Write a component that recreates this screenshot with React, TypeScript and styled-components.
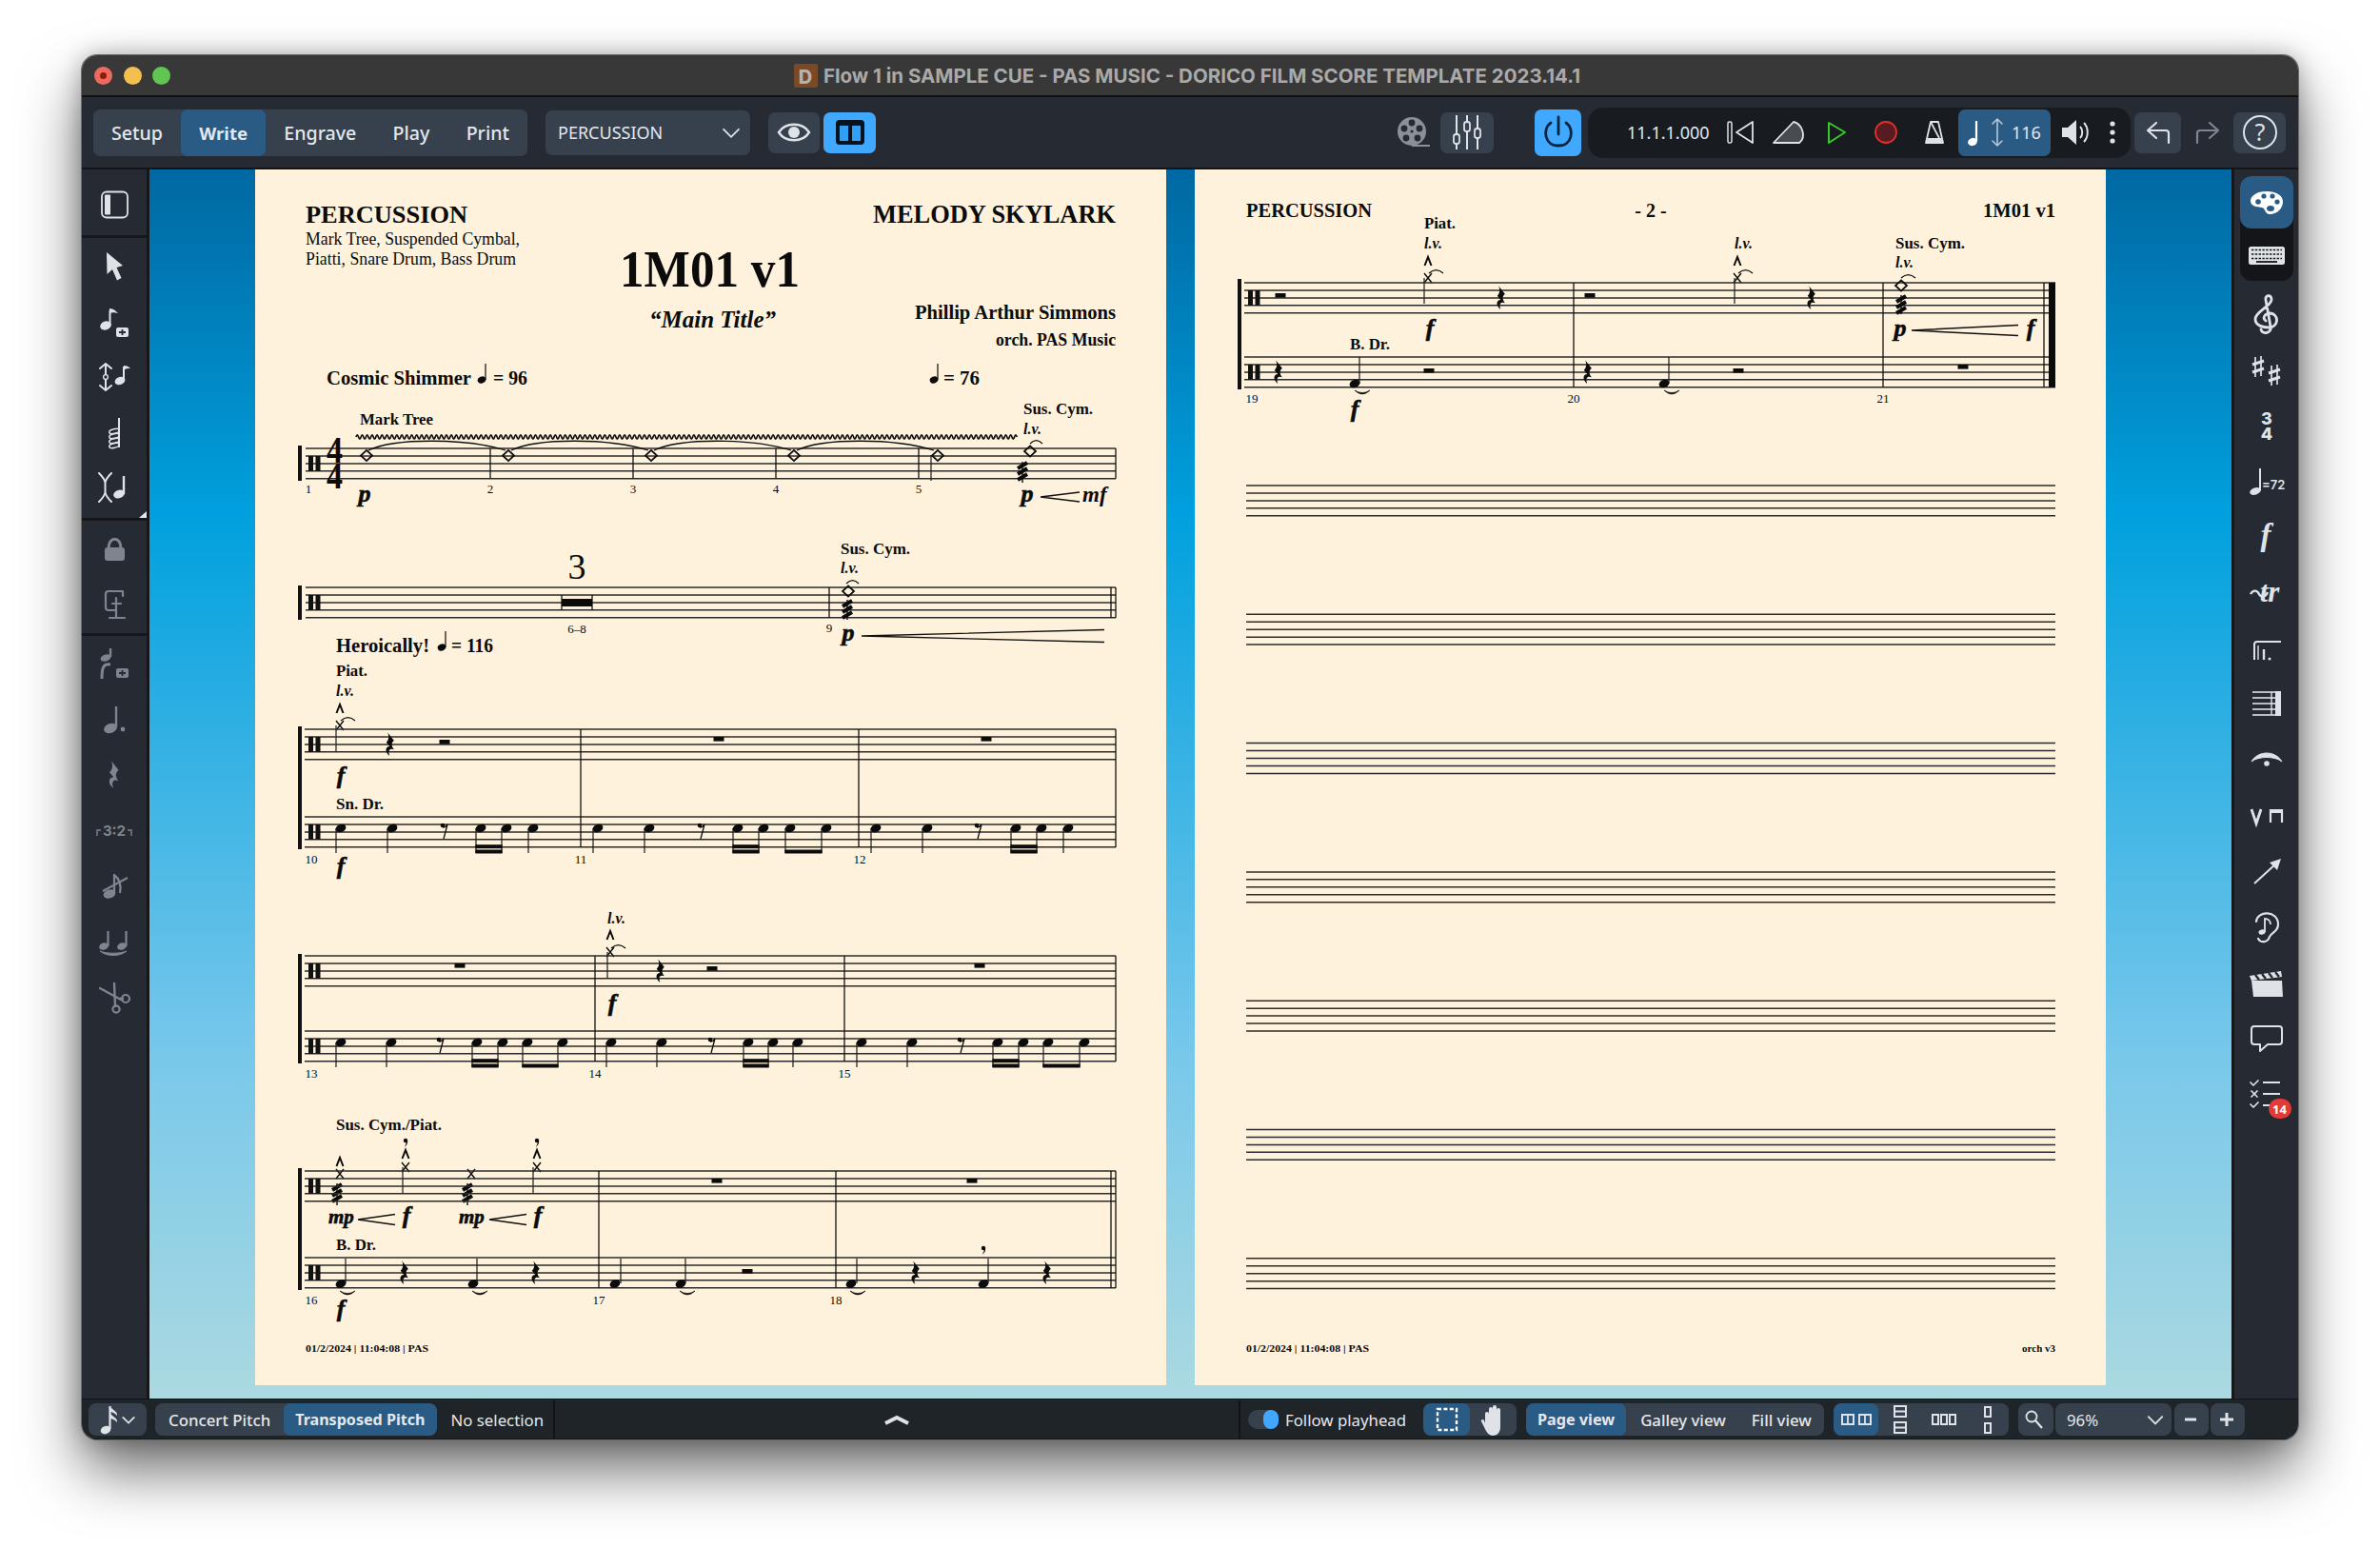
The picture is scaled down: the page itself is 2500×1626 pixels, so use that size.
import React from 'react';
import styled, { createGlobalStyle } from 'styled-components';

const Global = createGlobalStyle`
  html, body { margin: 0; padding: 0; background: #fff; }
  body { font-family: "Noto Sans", sans-serif; }
`;

const Screen = styled.div`
  width: 2500px;
  height: 1626px;
  overflow: hidden;
  background: #fff;
  padding: 58px 86px 0 86px;
  box-sizing: border-box;
`;
const Win = styled.div`
  width: 2328px;
  height: 1454px;
  display: flex;
  flex-direction: column;
  border-radius: 16px;
  overflow: hidden;
`;
const WindowShadow = styled.div`
  border-radius: 16px;
  box-shadow: 0 0 0 1px #6a6a6a, 0 32px 62px rgba(0, 0, 0, 0.58), 0 0 24px rgba(0, 0, 0, 0.28);
`;
const TitleBar = styled.div`
  height: 44px;
  flex: none;
  box-sizing: border-box;
  display: grid;
  grid-template-columns: 1fr auto 1fr;
  align-items: center;
  background: #383838;
  border-bottom: 2px solid #111;
  padding: 0 19px 0 13px;
`;
const Lights = styled.div`
  display: flex;
  gap: 11.5px;
`;
const Light = styled.span<{ $c: string; $dot?: boolean }>`
  width: 19px;
  height: 19px;
  border-radius: 50%;
  background: ${p => p.$c};
  display: flex;
  align-items: center;
  justify-content: center;
  &::after {
    content: '';
    width: 7px;
    height: 7px;
    border-radius: 50%;
    background: ${p => (p.$dot ? '#8e1b12' : 'transparent')};
  }
`;
const TitleWrap = styled.div`
  display: flex;
  align-items: center;
  gap: 6px;
`;
const TitleText = styled.span`
  font-family: Inter, sans-serif;
  font-weight: 700;
  font-size: 20.5px;
  color: #a9a9a9;
  white-space: nowrap;
`;
const Toolbar = styled.div`
  height: 76px;
  flex: none;
  box-sizing: border-box;
  display: flex;
  align-items: center;
  padding: 0 13px 0 12px;
  background: #262b33;
  border-bottom: 2px solid #121417;
`;
const Group = styled.div<{ $w?: number }>`
  display: flex;
  align-items: stretch;
  background: #37414d;
  border-radius: 7px;
  overflow: hidden;
  ${p => (p.$w ? `width:${p.$w}px;` : '')}
`;
const Tabs = styled(Group)`
  height: 49px;
  justify-content: space-between;
`;
const Tab = styled.div<{ $on?: boolean; $size?: number; $pad?: number }>`
  display: flex;
  align-items: center;
  justify-content: center;
  box-sizing: border-box;
  padding: 0 ${p => p.$pad ?? 19}px;
  color: #e4e7eb;
  font-size: ${p => p.$size ?? 19.6}px;
  font-weight: ${p => (p.$on ? 700 : 500)};
  border-radius: 7px;
  white-space: nowrap;
  background: ${p => (p.$on ? '#2a5b85' : 'transparent')};
`;
const Dropdown = styled.div`
  width: 215px;
  height: 47px;
  margin-left: 19px;
  box-sizing: border-box;
  padding: 0 8px 0 13px;
  display: flex;
  align-items: center;
  justify-content: space-between;
  background: #37414d;
  border-radius: 7px;
  color: #e4e7eb;
  font-size: 18px;
`;
const ToolBtn = styled.div<{ $w: number; $bg?: string; $ml?: number; $h?: number }>`
  width: ${p => p.$w}px;
  height: ${p => p.$h ?? 43}px;
  margin-left: ${p => p.$ml ?? 0}px;
  display: flex;
  align-items: center;
  justify-content: center;
  flex: none;
  border-radius: 7px;
  background: ${p => p.$bg ?? 'transparent'};
`;
const Spacer = styled.div`
  flex: 1;
`;
const Transport = styled.div`
  width: 570px;
  height: 53px;
  box-sizing: border-box;
  margin-left: 7px;
  padding-left: 41px;
  display: flex;
  align-items: center;
  gap: 7px;
  background: #181b1f;
  border-radius: 16px;
`;
const TimeText = styled.span`
  color: #e4e7eb;
  font-size: 18px;
  margin-right: 6px;
  width: 84px;
  white-space: nowrap;
`;
const TempoBox = styled.div`
  width: 97px;
  height: 49px;
  margin: 0 -3px 0 -4px;
  flex: none;
  box-sizing: border-box;
  border-radius: 7px;
  background: #2a5b85;
  color: #e4e7eb;
  font-size: 18px;
  display: flex;
  align-items: center;
`;
const Main = styled.div`
  flex: 1;
  min-height: 0;
  display: flex;
`;
const LeftPanel = styled.div`
  width: 71px;
  flex: none;
  box-sizing: border-box;
  background: #262b33;
  border-right: 3px solid #15171a;
  display: flex;
  flex-direction: column;
`;
const LeftSection = styled.div<{ $h?: number; $last?: boolean }>`
  position: relative;
  box-sizing: border-box;
  ${p => (p.$h ? `height:${p.$h}px;` : 'flex:1;')}
  padding-top: 1px;
  border-bottom: ${p => (p.$last ? 'none' : '3px solid #15171a')};
`;
const Slot = styled.div<{ $h?: number }>`
  height: ${p => p.$h ?? 58}px;
  display: flex;
  align-items: center;
  justify-content: center;
`;
const CornerMark = styled.span`
  position: absolute;
  right: 0;
  bottom: 0;
  width: 0;
  height: 0;
  border-style: solid;
  border-width: 0 0 7px 8px;
  border-color: transparent transparent #e4e7eb transparent;
`;
const Canvas = styled.div`
  flex: 1;
  min-width: 0;
  box-sizing: border-box;
  padding: 0 130px 13px 111px;
  display: flex;
  gap: 30px;
  background: linear-gradient(180deg, #0068a2 0%, #00a0de 28%, #78c8eb 72%, #abd9e0 100%);
`;
const Sheet = styled.svg`
  width: 957px;
  height: 1277px;
  flex: none;
  display: block;
  background: #fef2dc;
`;
const RightPanel = styled.div`
  width: 70px;
  flex: none;
  box-sizing: border-box;
  background: #262b33;
  border-left: 3px solid #15171a;
  padding-top: 7px;
  display: flex;
  flex-direction: column;
  align-items: center;
`;
const PaletteGroup = styled.div`
  width: 56px;
  height: 110px;
  flex: none;
  background: #131518;
  border-radius: 12px;
  margin-bottom: 7px;
`;
const PaletteBtn = styled.div`
  height: 55px;
  background: #2a5b85;
  border-radius: 12px;
  display: flex;
  align-items: center;
  justify-content: center;
`;
const KeysBtn = styled.div`
  height: 55px;
  display: flex;
  align-items: center;
  justify-content: center;
`;
const RightSlot = styled.div`
  height: 58.4px;
  flex: none;
  position: relative;
  display: flex;
  align-items: center;
  justify-content: center;
`;
const Badge = styled.span`
  position: absolute;
  left: 24px;
  top: 35px;
  width: 24px;
  height: 21px;
  border-radius: 11px;
  background: #e23a36;
  color: #fff;
  font-size: 13px;
  font-weight: 700;
  display: flex;
  align-items: center;
  justify-content: center;
`;
const StatusBar = styled.div`
  height: 43px;
  flex: none;
  box-sizing: border-box;
  background: #1f2428;
  border-top: 1px solid #111316;
  border-bottom: 1px solid #15171a;
  display: flex;
  align-items: center;
  padding: 1px 0 0 7px;
  color: #e4e7eb;
  font-size: 16.8px;
`;
const SmallGroup = styled(Group)`
  height: 34px;
  flex: none;
  border-radius: 8px;
`;
const NoteMenu = styled(SmallGroup)`
  width: 61px;
  align-items: center;
  justify-content: center;
`;
const StatusText = styled.span<{ $ml?: number; $w?: number }>`
  margin-left: ${p => p.$ml ?? 0}px;
  ${p => (p.$w ? `width:${p.$w}px;` : '')}
  white-space: nowrap;
`;
const Center = styled.div`
  flex: 1;
  height: 100%;
  display: flex;
  align-items: center;
  justify-content: center;
  border-left: 2px solid #111316;
  border-right: 2px solid #111316;
  margin-left: 10px;
`;
const Toggle = styled.span`
  width: 32px;
  height: 20px;
  margin: 0 7px 0 8px;
  flex: none;
  border-radius: 10px;
  background: #37414d;
  display: flex;
  justify-content: flex-end;
  &::after {
    content: '';
    width: 16px;
    height: 20px;
    border-radius: 10px;
    background: #40a9ff;
  }
`;
const IconCell = styled.div<{ $w: number; $on?: boolean }>`
  width: ${p => p.$w}px;
  display: flex;
  align-items: center;
  justify-content: center;
  border-radius: 8px;
  background: ${p => (p.$on ? '#2a5b85' : 'transparent')};
`;
const StatusGap = styled.div<{ $w: number }>`
  width: ${p => p.$w}px;
  flex: none;
`;
const ZoomBox = styled(SmallGroup)`
  width: 122px;
  box-sizing: border-box;
  padding: 0 6px 0 12px;
  align-items: center;
  justify-content: space-between;
`;

const Ic = styled.svg.attrs<{ $s?: number; $w?: number; $dim?: boolean; $c?: string }>(p => ({
  viewBox: `0 0 ${p.$w ?? p.$s ?? 44} ${p.$s ?? 44}`,
  width: p.$w ?? p.$s ?? 44,
  height: p.$s ?? 44,
}))<{ $s?: number; $w?: number; $dim?: boolean; $c?: string }>`
  display: block;
  flex: none;
  color: ${p => p.$c ?? (p.$dim ? '#7e858f' : '#dfe3e8')};
`;

const Ink = (p: any) => <path fill="none" stroke="currentColor" strokeWidth={2} strokeLinecap="round" strokeLinejoin="round" {...p} />;

/* Left panel icons */
const PanelIcon = () => (
  <Ic>
    <rect x="9" y="8.5" width="27" height="27" rx="5" fill="none" stroke="currentColor" strokeWidth="1.8" />
    <rect x="12" y="11.5" width="6" height="21" rx="1" fill="currentColor" />
  </Ic>
);
const PointerIcon = () => (
  <Ic>
    <path d="M14 7 L31 21 L24.5 23 L29.5 34 L25 36.5 L20 25 L14.5 30 Z" fill="currentColor" />
  </Ic>
);
const PlusBox = ({ x, y }: { x: number; y: number }) => (
  <g>
    <rect x={x} y={y} width="13" height="10" rx="2" fill="currentColor" />
    <path d={`M${x + 3} ${y + 5} H${x + 10} M${x + 6.5} ${y + 2} V${y + 8}`} stroke="#262b33" strokeWidth="1.8" />
  </g>
);
const NoteAddIcon = () => (
  <Ic>
    <ellipse cx="13" cy="26" rx="6" ry="4.4" transform="rotate(-20 13 26)" fill="currentColor" />
    <path d="M17.5 10 V26" stroke="currentColor" strokeWidth="2" />
    <path d="M17 8 C21 8 24 11 26 13 C22 12 20 12 17 13 Z" fill="currentColor" />
    <PlusBox x={24} y={28} />
  </Ic>
);
const InsertNoteIcon = () => (
  <Ic>
    <Ink d="M13 8 V36 M7 13 L13 8 L19 13 M7 31 L13 36 L19 31" />
    <circle cx="13" cy="22" r="2.4" fill="#262b33" stroke="currentColor" strokeWidth="1.4" />
    <ellipse cx="28" cy="26" rx="5.6" ry="4" transform="rotate(-20 28 26)" fill="currentColor" />
    <path d="M32 11 V26" stroke="currentColor" strokeWidth="2" />
    <path d="M32 10 C35 10 37 11 39 13 C36 13 34 13 32 15 Z" fill="currentColor" />
  </Ic>
);
const CoilIcon = () => (
  <Ic>
    <path d="M27 7 V38" stroke="currentColor" strokeWidth="2" />
    {[21, 26, 31, 36].map(y => (
      <ellipse key={y} cx="22" cy={y} rx="5.4" ry="2.3" transform={`rotate(-14 22 ${y})`} fill="none" stroke="currentColor" strokeWidth="1.5" />
    ))}
  </Ic>
);
const BeamNoteIcon = () => (
  <Ic>
    <Ink d="M6 7 C9 10 12 13 12.5 17 V27 C12 31 9 34 6 37 M19 7 C16 10 13 13 12.5 17 M19 37 C16 34 13 31 12.5 27" />
    <ellipse cx="27" cy="29" rx="6" ry="4.2" transform="rotate(-18 27 29)" fill="currentColor" />
    <path d="M32 10 V29" stroke="currentColor" strokeWidth="2.4" />
  </Ic>
);
const LockIcon = () => (
  <Ic $dim>
    <rect x="12" y="20" width="21" height="14" rx="3" fill="currentColor" />
    <path d="M16 21 C16 8 29 8 29 21" fill="none" stroke="currentColor" strokeWidth="3" />
  </Ic>
);
const ClampIcon = () => (
  <Ic $dim>
    <Ink d="M31 13 V8 H16 C14 8 13 9 13 11 V25 C13 27 14 28 16 28 H24 M24 15 V36 M17 36 H33 M20 21 H29" strokeWidth="2.2" />
  </Ic>
);
const RestNoteIcon = () => (
  <Ic $dim>
    <path d="M18 5 V14" stroke="currentColor" strokeWidth="2.4" />
    <ellipse cx="13" cy="15" rx="5.6" ry="3.4" transform="rotate(-20 13 15)" fill="currentColor" />
    <path d="M18 22 C11 21 9 24 9 37" fill="none" stroke="currentColor" strokeWidth="3" />
    <PlusBox x={24} y={26} />
  </Ic>
);
const DottedIcon = () => (
  <Ic $dim>
    <ellipse cx="18" cy="31" rx="7" ry="5" transform="rotate(-18 18 31)" fill="currentColor" />
    <path d="M24 8 V30" stroke="currentColor" strokeWidth="2.4" />
    <circle cx="31" cy="32" r="2.4" fill="currentColor" />
  </Ic>
);
const RestIcon = () => (
  <Ic $dim>
    <path
      transform="translate(22 22) scale(1.25)"
      d="M-2.5 -12 L3.6 -4 C1 -1.5 0.5 1 3.6 5 C0.5 3.6 -3 4.6 -0.8 11 C-5.4 7.5 -5 2 -0.6 1.8 L-4 -2.2 C-1.2 -5 -1 -8 -2.5 -12 Z"
      fill="currentColor"
    />
  </Ic>
);
const TupletIcon = () => (
  <Ic $dim>
    <text x="22" y="28" textAnchor="middle" fontFamily="Inter, sans-serif" fontWeight="700" fontSize="15" fill="currentColor">3:2</text>
    <path d="M4 28 V22 H8 M40 28 V22 H36" fill="none" stroke="currentColor" strokeWidth="1.4" />
  </Ic>
);
const NoNoteIcon = () => (
  <Ic $dim>
    <ellipse cx="17" cy="31" rx="6.5" ry="4.6" transform="rotate(-18 17 31)" fill="currentColor" />
    <path d="M22 10 V30 M22 11 C26 14 30 20 28 30" fill="none" stroke="currentColor" strokeWidth="2.2" />
    <path d="M10 28 L36 14" stroke="currentColor" strokeWidth="2" />
  </Ic>
);
const TieIcon = () => (
  <Ic $dim>
    <ellipse cx="11" cy="28" rx="5" ry="3.6" transform="rotate(-20 11 28)" fill="currentColor" />
    <path d="M15.5 12 V28" stroke="currentColor" strokeWidth="2.2" />
    <ellipse cx="30" cy="28" rx="5" ry="3.6" transform="rotate(-20 30 28)" fill="currentColor" />
    <path d="M34.5 12 V28" stroke="currentColor" strokeWidth="2.2" />
    <path d="M7 33 C14 39 28 39 35 33 C28 36 14 36 7 33 Z" fill="currentColor" stroke="currentColor" />
  </Ic>
);
const ScissorsIcon = () => (
  <Ic $dim>
    <Ink d="M7 14 L29 26 M22 9 L23 33 M27 25 H31" strokeWidth="2.4" />
    <circle cx="34" cy="25" r="4" fill="none" stroke="currentColor" strokeWidth="2.2" />
    <circle cx="24" cy="36" r="3.6" fill="none" stroke="currentColor" strokeWidth="2.2" />
  </Ic>
);

/* Right panel icons */
const PaletteIcon = () => (
  <Ic $c="#fff">
    <path d="M22 10 C11 10 5 15 5 20 C5 26 12 26 17 27 C21 28 20 34 25 34 C34 34 39 27 39 21 C39 14 32 10 22 10 Z" fill="currentColor" />
    <circle cx="13" cy="21" r="2.8" fill="#2a5b85" />
    <circle cx="19" cy="15" r="2.6" fill="#2a5b85" />
    <circle cx="28" cy="15" r="2.6" fill="#2a5b85" />
    <circle cx="33" cy="21" r="2.6" fill="#2a5b85" />
    <ellipse cx="26" cy="28" rx="4" ry="3" fill="#2a5b85" />
  </Ic>
);
const KeyboardIcon = () => (
  <Ic>
    <rect x="3" y="13" width="38" height="19" rx="2.5" fill="currentColor" />
    {[16.5, 21, 25.5].map(y => (
      <path key={y} d={`M6 ${y} H38`} stroke="#131518" strokeWidth="1.6" strokeDasharray="2.4 1.4" />
    ))}
    <path d="M11 29 H33" stroke="#131518" strokeWidth="1.8" />
  </Ic>
);
const ClefIcon = () => (
  <Ic>
    <Ink strokeWidth="2.8" d="M26 34 C28 41 17 43 16 37 M26 34 L21 6 C20 1 26 0 27 5 C28 12 10 18 10 26 C10 33 18 35 24 35 C35 35 35 21 26 20 C20 20 17 25 21 28" />
  </Ic>
);
const Sharp = ({ x, y }: { x: number; y: number }) => (
  <g>
    <path d={`M${x - 3} ${y - 10} V${y + 11} M${x + 3} ${y - 11} V${y + 10}`} stroke="currentColor" strokeWidth="1.7" />
    <path d={`M${x - 6} ${y - 2} L${x + 6} ${y - 6} M${x - 6} ${y + 6} L${x + 6} ${y + 2}`} stroke="currentColor" strokeWidth="3" />
  </g>
);
const SharpsIcon = () => (
  <Ic>
    <Sharp x={13} y={17} />
    <Sharp x={30} y={26} />
  </Ic>
);
const TimeSigIcon = () => (
  <Ic>
    <text x="22" y="20" textAnchor="middle" fontFamily="Inter, sans-serif" fontWeight="800" fontSize="18" fill="currentColor">3</text>
    <text x="22" y="36" textAnchor="middle" fontFamily="Inter, sans-serif" fontWeight="800" fontSize="18" fill="currentColor">4</text>
  </Ic>
);
const TempoIcon = () => (
  <Ic>
    <ellipse cx="10" cy="32" rx="6" ry="3.6" transform="rotate(-18 10 32)" fill="currentColor" />
    <path d="M15 8 V31" stroke="currentColor" strokeWidth="2" />
    <text x="17" y="30" fontFamily="Inter, sans-serif" fontWeight="600" fontSize="13" fill="currentColor">=72</text>
  </Ic>
);
const DynamicIcon = () => (
  <Ic>
    <text x="21" y="30" textAnchor="middle" fontFamily='"Liberation Serif", serif' fontStyle="italic" fontWeight="700" fontSize="33" fill="currentColor">f</text>
  </Ic>
);
const TrillIcon = () => (
  <Ic>
    <text x="25" y="31" textAnchor="middle" fontFamily='"Liberation Serif", serif' fontStyle="italic" fontWeight="700" fontSize="31" fill="currentColor">tr</text>
    <path d="M5 23 C8 18 12 19 14 23 C16 27 21 26 23 21" fill="none" stroke="currentColor" strokeWidth="2.4" />
  </Ic>
);
const EndingIcon = () => (
  <Ic>
    <path d="M9 33 V17 C9 15 10 14 12 14 H37" fill="none" stroke="currentColor" strokeWidth="2" />
    <path d="M13 33 V18" stroke="currentColor" strokeWidth="1.4" />
    <path d="M19 22 V33" stroke="currentColor" strokeWidth="2.4" />
    <circle cx="25" cy="32" r="1.5" fill="currentColor" />
  </Ic>
);
const BarsIcon = () => (
  <Ic>
    {[9, 15, 21, 27, 33].map(y => (
      <path key={y} d={`M7 ${y} H36`} stroke="currentColor" strokeWidth="1.6" />
    ))}
    <path d="M27 9 V33" stroke="currentColor" strokeWidth="1.4" />
    <rect x="31" y="8" width="6" height="26" fill="currentColor" />
  </Ic>
);
const FermataIcon = () => (
  <Ic>
    <path d="M6 24 C13 12 31 12 38 24 C31 18 13 18 6 24 Z" fill="currentColor" stroke="currentColor" strokeWidth="1" />
    <circle cx="22" cy="26" r="2.8" fill="currentColor" />
  </Ic>
);
const BowingIcon = () => (
  <Ic>
    <path d="M6 15 L11 30 L16 15" fill="none" stroke="currentColor" strokeWidth="2.8" />
    <path d="M26 29 V16 H38 V29" fill="none" stroke="currentColor" strokeWidth="2.2" />
    <path d="M26 17 H38" stroke="currentColor" strokeWidth="4" />
  </Ic>
);
const DiagArrowIcon = () => (
  <Ic>
    <path d="M9 35 L32 14" stroke="currentColor" strokeWidth="2" />
    <path d="M37 9 L33 21 L25 13 Z" fill="currentColor" />
  </Ic>
);
const EarIcon = () => (
  <Ic>
    <Ink strokeWidth="2.2" d="M11 17 C12 5 34 5 34 20 C34 28 27 28 25 33 C23 39 16 40 13 35" />
    <ellipse cx="17" cy="28" rx="3.6" ry="2.6" transform="rotate(-18 17 28)" fill="currentColor" />
    <path d="M20 28 V14 C23 14 26 16 26 20" fill="none" stroke="currentColor" strokeWidth="1.8" />
  </Ic>
);
const ClapperIcon = () => (
  <Ic>
    <path d="M6 20 H38 L39 37 H8 Z" fill="currentColor" />
    <path d="M4 15 L37 10 L38 16 L6 20 Z" fill="currentColor" />
    <path d="M10 14 L14 19 M17 13 L21 18 M24 12 L28 17 M31 11 L35 16" stroke="#262b33" strokeWidth="2.4" />
  </Ic>
);
const BubbleIcon = () => (
  <Ic>
    <path d="M9 10 H35 C37 10 38 11 38 13 V26 C38 28 37 29 35 29 H23 L15 36 L15 29 H9 C7 29 6 28 6 26 V13 C6 11 7 10 9 10 Z" fill="none" stroke="currentColor" strokeWidth="2" strokeLinejoin="round" />
  </Ic>
);
const ChecklistIcon = () => (
  <Ic>
    <Ink strokeWidth="1.7" d="M5 10 L8 13 L13 8 M6 19 L12 25 M12 19 L6 25 M5 33 L8 36 L13 31" />
    <path d="M18 10 H36 M18 22 H36 M18 34 H36" stroke="currentColor" strokeWidth="2" />
  </Ic>
);

/* Toolbar icons */
const Chevron = ({ s = 24 }: { s?: number }) => (
  <Ic $s={s}>
    <path d={`M${s * 0.15} ${s * 0.35} L${s * 0.5} ${s * 0.7} L${s * 0.85} ${s * 0.35}`} fill="none" stroke="currentColor" strokeWidth="1.8" />
  </Ic>
);
const EyeIcon = () => (
  <Ic $s={40}>
    <path d="M4 20 C11 9 29 9 36 20 C29 31 11 31 4 20 Z" fill="none" stroke="currentColor" strokeWidth="2.4" />
    <circle cx="20" cy="20" r="6" fill="currentColor" />
  </Ic>
);
const SplitIcon = () => (
  <Ic $s={40} $c="#06121c">
    <rect x="5" y="7" width="30" height="26" rx="4" fill="currentColor" />
    <rect x="9" y="13" width="9" height="16" fill="#2ea0f5" />
    <rect x="22" y="13" width="9" height="16" fill="#2ea0f5" />
  </Ic>
);
const ReelIcon = () => (
  <Ic $c="#8b9096">
    <circle cx="20" cy="21" r="15" fill="currentColor" />
    {[[20, 12], [12, 18], [14, 28], [26, 28], [28, 18]].map(([x, y]) => (
      <circle key={x + '-' + y} cx={x} cy={y} r="3.4" fill="#262b33" />
    ))}
    <circle cx="20" cy="21" r="1.6" fill="#262b33" />
    <path d="M20 36 H39" stroke="currentColor" strokeWidth="2" />
  </Ic>
);
const MixerIcon = () => (
  <Ic>
    {[[11, 29], [22, 16], [33, 23]].map(([x, y]) => (
      <g key={x}>
        <path d={`M${x} 4 V40`} stroke="currentColor" strokeWidth="2" />
        <rect x={x - 3} y={y - 5} width="6" height="10" rx="2.5" fill="#37414d" stroke="currentColor" strokeWidth="1.8" />
      </g>
    ))}
  </Ic>
);
const PowerIcon = () => (
  <Ic $c="#07243c">
    <path d="M14 12 C5 18 7 36 22 36 C37 36 39 18 30 12" fill="none" stroke="currentColor" strokeWidth="2.8" strokeLinecap="round" />
    <path d="M22 6 V24" stroke="currentColor" strokeWidth="2.8" strokeLinecap="round" />
  </Ic>
);
const RewindIcon = () => (
  <Ic>
    <rect x="9" y="11" width="4" height="22" rx="1.6" fill="none" stroke="currentColor" strokeWidth="1.5" />
    <path d="M35 11 V33 L18 22 Z" fill="none" stroke="currentColor" strokeWidth="1.8" strokeLinejoin="round" />
  </Ic>
);
const FixedIcon = () => (
  <Ic>
    <path d="M6 33 L27 11 C36 13 41 27 33 33 Z" fill="#474c53" stroke="currentColor" strokeWidth="1.8" strokeLinejoin="round" />
  </Ic>
);
const PlayIcon = () => (
  <Ic $c="#36cb26">
    <path d="M13 12 L30 22 L13 33 Z" fill="none" stroke="currentColor" strokeWidth="2" strokeLinejoin="round" />
  </Ic>
);
const RecordIcon = () => (
  <Ic>
    <circle cx="22" cy="22" r="11" fill="#561c1f" stroke="#e52d2d" strokeWidth="1.8" />
  </Ic>
);
const MetronomeIcon = () => (
  <Ic>
    <path d="M18 11 H26 L31 33 H13 Z" fill="none" stroke="currentColor" strokeWidth="1.8" strokeLinejoin="round" />
    <path d="M15 28 H29 L31 33 H13 Z" fill="currentColor" />
    <path d="M18 11 L27 28" stroke="currentColor" strokeWidth="1.8" />
  </Ic>
);
const TempoNote = () => (
  <Ic $w={28} $s={44} $c="#fff">
    <ellipse cx="15" cy="32" rx="5" ry="4" transform="rotate(-20 15 32)" fill="currentColor" />
    <path d="M19 10 V31" stroke="currentColor" strokeWidth="2.2" />
  </Ic>
);
const UpDown = () => (
  <Ic $w={28} $s={44} $c="#b9c6d3">
    <Ink strokeWidth="1.6" d="M13 8 V36 M8 13 L13 8 L18 13 M8 31 L13 36 L18 31" />
  </Ic>
);
const SpeakerIcon = () => (
  <Ic>
    <path d="M8 17 H14 L23 9 V35 L14 27 H8 Z" fill="currentColor" />
    <path d="M27 16 C30 19 30 25 27 28 M31 12 C36 17 36 27 31 32" fill="none" stroke="currentColor" strokeWidth="2" />
  </Ic>
);
const KebabIcon = () => (
  <Ic $w={20}>
    {[13, 22, 31].map(y => <circle key={y} cx="10" cy={y} r="2.6" fill="currentColor" />)}
  </Ic>
);
const UndoIcon = () => (
  <Ic>
    <Ink strokeWidth="2.2" d="M20 12 L11 20 L20 28 M11 20 H30 C32 20 33 21 33 23 V33" />
  </Ic>
);
const RedoIcon = () => (
  <Ic $dim>
    <Ink strokeWidth="2.2" d="M24 12 L33 20 L24 28 M33 20 H14 C12 20 11 21 11 23 V33" />
  </Ic>
);
const HelpIcon = () => (
  <Ic>
    <circle cx="22" cy="22" r="17" fill="none" stroke="currentColor" strokeWidth="2" />
    <text x="22" y="31" textAnchor="middle" fontFamily='"Noto Sans", sans-serif' fontSize="25" fill="currentColor">?</text>
  </Ic>
);
const DoricoIcon = () => (
  <Ic $s={25}>
    <rect width="25" height="25" rx="2" fill="#7a4a28" />
    <text x="12" y="21" textAnchor="middle" fontFamily="Inter, sans-serif" fontWeight="800" fontSize="20" fill="#b6b1aa">D</text>
  </Ic>
);

/* Status bar icons */
const SixteenthIcon = () => (
  <Ic $s={36} $w={22}>
    <ellipse cx="7" cy="29" rx="5.5" ry="4" transform="rotate(-22 7 29)" fill="currentColor" />
    <path d="M11.5 4 V28" stroke="currentColor" strokeWidth="2.2" />
    <path d="M11.5 4 C13 8 20 9 19 14 C16 11 14 10 11.5 10 Z M11.5 11 C13 15 20 16 19 21 C16 18 14 17 11.5 17 Z" fill="currentColor" />
  </Ic>
);
const Caret = () => (
  <Ic $s={24} $w={30}>
    <path d="M3 16 L15 10 L27 16" fill="none" stroke="currentColor" strokeWidth="4" />
  </Ic>
);
const MarqueeIcon = () => (
  <Ic $s={34}>
    <rect x="7" y="6" width="20" height="22" fill="none" stroke="#fff" strokeWidth="2.4" strokeDasharray="4 2.4" />
  </Ic>
);
const HandIcon = () => (
  <Ic $s={36}>
    <path d="M9 22 V12 a2 2 0 0 1 4 0 V19 V7 a2 2 0 0 1 4 0 V18 V5 a2 2 0 0 1 4 0 V18 V8 a2 2 0 0 1 4 0 V26 c0 5 -3 9 -8 9 c-4 0 -7 -4 -9 -9 l-3 -6 c-1 -2 2 -3 3 -1 Z" fill="currentColor" />
  </Ic>
);
const Box = ({ x, y, w, h, split }: { x: number; y: number; w: number; h: number; split: 'v' | 'h' | 'n' }) => (
  <g>
    <rect x={x} y={y} width={w} height={h} fill="none" stroke="currentColor" strokeWidth="2" />
    {split === 'v' && <path d={`M${x + w / 2} ${y} V${y + h}`} stroke="currentColor" strokeWidth="1.8" />}
    {split === 'h' && <path d={`M${x} ${y + h / 2} H${x + w}`} stroke="currentColor" strokeWidth="1.8" />}
  </g>
);
const SpreadsIcon = () => (
  <Ic $s={34}>
    <Box x={2} y={12} w={12} h={10} split="v" />
    <Box x={20} y={12} w={12} h={10} split="v" />
  </Ic>
);
const StackIcon = () => (
  <Ic $s={34}>
    <Box x={11} y={3} w={12} h={11} split="h" />
    <Box x={11} y={20} w={12} h={11} split="h" />
  </Ic>
);
const RowIcon = () => (
  <Ic $s={34}>
    <Box x={5} y={12} w={6} h={10} split="n" />
    <Box x={14} y={12} w={6} h={10} split="n" />
    <Box x={23} y={12} w={6} h={10} split="n" />
  </Ic>
);
const ColumnIcon = () => (
  <Ic $s={34}>
    <Box x={14} y={4} w={6} h={10} split="n" />
    <Box x={14} y={21} w={6} h={10} split="n" />
  </Ic>
);
const SearchIcon = () => (
  <Ic $s={34}>
    <circle cx="14" cy="14" r="5.5" fill="none" stroke="currentColor" strokeWidth="1.8" />
    <path d="M18 18 L25 26" stroke="currentColor" strokeWidth="2.2" />
  </Ic>
);
const MinusIcon = () => (
  <Ic $s={34}>
    <path d="M11 17 H23" stroke="currentColor" strokeWidth="3" />
  </Ic>
);
const PlusIcon = () => (
  <Ic $s={34}>
    <path d="M10 17 H24 M17 10 V24" stroke="currentColor" strokeWidth="3" />
  </Ic>
);

/* Score parts */
const ScoreText = styled.text<{ $s: number; $i?: boolean; $reg?: boolean; $heavy?: boolean }>`
  font-family: "Liberation Serif", serif;
  font-size: ${p => p.$s}px;
  font-weight: ${p => (p.$reg ? 400 : 700)};
  font-style: ${p => (p.$i ? 'italic' : 'normal')};
  fill: #0b0b0b;
  ${p => (p.$heavy ? 'stroke:#0b0b0b;stroke-width:.6px;' : '')}
`;
type TP = { x: number; y: number; s: number; w?: number; i?: boolean; reg?: boolean; heavy?: boolean; a?: 'middle' | 'end'; children: React.ReactNode };
const T = ({ x, y, s, w, i, reg, heavy, a, children }: TP) => (
  <ScoreText x={x} y={y} $s={s} $i={i} $reg={reg} $heavy={heavy} textAnchor={a} textLength={w} lengthAdjust={w ? 'spacingAndGlyphs' : undefined}>
    {children}
  </ScoreText>
);
const Staff = ({ x1, x2, top, gap = 7.95 }: { x1: number; x2: number; top: number; gap?: number }) => (
  <g>
    {[0, 1, 2, 3, 4].map(n => (
      <line key={n} x1={x1} x2={x2} y1={top + n * gap} y2={top + n * gap} stroke="#2b2b2b" strokeWidth="1.5" />
    ))}
  </g>
);
const Bar = ({ x, y1, y2, w = 1.3 }: { x: number; y1: number; y2: number; w?: number }) => (
  <line x1={x} x2={x} y1={y1} y2={y2} stroke="#111" strokeWidth={w} />
);
const Clef = ({ x, top }: { x: number; top: number }) => (
  <g fill="#111">
    <rect x={x} y={top + 8} width="5" height="16" />
    <rect x={x + 7.5} y={top + 8} width="5" height="16" />
  </g>
);
const QNote = ({ x, y, r = 5.6 }: { x: number; y: number; r?: number }) => (
  <ellipse cx={x} cy={y} rx={r} ry={r * 0.72} transform={`rotate(-22 ${x} ${y})`} fill="#0b0b0b" />
);
const Stem = ({ x, y1, y2 }: { x: number; y1: number; y2: number }) => (
  <line x1={x} x2={x} y1={y1} y2={y2} stroke="#1a1a1a" strokeWidth="1.2" />
);
const QRest = ({ x, y }: { x: number; y: number }) => (
  <path
    transform={`translate(${x} ${y}) scale(1.12 1.05)`}
    d="M-2.5 -12 L3.4 -4 C1 -1.5 0.5 1 3.4 5 C0.5 3.6 -3 4.6 -0.6 11.5 C-5.2 7.5 -5 2 -0.6 1.8 L-3.8 -2.2 C-1.2 -5 -1 -8 -2.5 -12 Z"
    fill="#0b0b0b"
  />
);
const ERest = ({ x, y }: { x: number; y: number }) => (
  <g>
    <circle cx={x - 2} cy={y - 2} r="2.3" fill="#0b0b0b" />
    <path d={`M${x - 2} ${y} C${x} ${y} ${x + 2} ${y - 1} ${x + 3} ${y - 3} L${x - 1} ${y + 12}`} fill="none" stroke="#0b0b0b" strokeWidth="1.3" />
  </g>
);
const Block = ({ x, y, w = 11, h = 4.6 }: { x: number; y: number; w?: number; h?: number }) => (
  <rect x={x - w / 2} y={y} width={w} height={h} fill="#0b0b0b" />
);
const Diamond = ({ x, y }: { x: number; y: number }) => (
  <polygon points={`${x},${y - 5.6} ${x + 6},${y} ${x},${y + 5.6} ${x - 6},${y}`} fill="none" stroke="#0b0b0b" strokeWidth="1.8" />
);
const XHead = ({ x, y }: { x: number; y: number }) => (
  <path d={`M${x - 4} ${y - 5} L${x + 4} ${y + 5} M${x + 4} ${y - 5} L${x - 4} ${y + 5}`} stroke="#0b0b0b" strokeWidth="1.4" />
);
const Marcato = ({ x, y }: { x: number; y: number }) => (
  <path d={`M${x - 3.5} ${y + 9} L${x} ${y} L${x + 3.5} ${y + 9}`} fill="none" stroke="#0b0b0b" strokeWidth="2" />
);
const Arc = ({ x, y, w = 14, h = 6 }: { x: number; y: number; w?: number; h?: number }) => (
  <path d={`M${x} ${y} Q${x + w / 2} ${y - h * 2} ${x + w} ${y}`} fill="none" stroke="#0b0b0b" strokeWidth="1.2" />
);
const Under = ({ x, y, w = 16 }: { x: number; y: number; w?: number }) => (
  <path d={`M${x} ${y} Q${x + w / 2} ${y + 8} ${x + w} ${y} Q${x + w / 2} ${y + 5} ${x} ${y} Z`} fill="#0b0b0b" stroke="#0b0b0b" strokeWidth="0.6" />
);
const Tremolo = ({ x, y1, y2 }: { x: number; y1: number; y2: number }) => {
  const ys = [y1 + 4, y1 + 10, y1 + 16];
  return (
    <g>
      <line x1={x} x2={x} y1={y1} y2={y2} stroke="#0b0b0b" strokeWidth="1.4" />
      {ys.map(y => (
        <line key={y} x1={x - 5} x2={x + 5} y1={y + 3} y2={y - 3} stroke="#0b0b0b" strokeWidth="4" />
      ))}
    </g>
  );
};
const Breath = ({ x, y }: { x: number; y: number }) => (
  <g fill="#0b0b0b">
    <circle cx={x} cy={y} r="2.2" />
    <path d={`M${x + 2.1} ${y} C${x + 2.5} ${y + 3.5} ${x + 1} ${y + 5} ${x - 1.2} ${y + 7} C${x} ${y + 4.5} ${x + 1} ${y + 3} ${x + 0.5} ${y + 1} Z`} />
  </g>
);
const Hairpin = ({ x1, x2, y, h, dim }: { x1: number; x2: number; y: number; h: number; dim?: boolean }) => (
  <path d={dim ? `M${x1} ${y} L${x2} ${y - h} M${x1} ${y} L${x2} ${y + h}` : `M${x2} ${y - h} L${x1} ${y} L${x2} ${y + h}`} fill="none" stroke="#111" strokeWidth="1.4" />
);
const Dyn = ({ x, y, children, s = 26 }: { x: number; y: number; s?: number; children: React.ReactNode }) => (
  <T x={x} y={y} s={s} i heavy a="middle">{children}</T>
);
const Num = ({ x, y, children }: { x: number; y: number; children: React.ReactNode }) => (
  <T x={x} y={y} s={13} reg a="middle">{children}</T>
);
const TempoMark = ({ x, y }: { x: number; y: number }) => (
  <g>
    <ellipse cx={x} cy={y - 5} rx="4.4" ry="3.5" transform={`rotate(-22 ${x} ${y - 5})`} fill="#0b0b0b" />
    <line x1={x + 4} x2={x + 4} y1={y - 22} y2={y - 5} stroke="#0b0b0b" strokeWidth="1.2" />
  </g>
);

type DrumItem = { q?: number; r?: number; b16?: [number, number]; b8?: [number, number] };
const DrumRow = ({ top, items }: { top: number; items: DrumItem[] }) => {
  const y = top + 12;
  const end = top + 38;
  const note = (x: number) => (
    <g key={'n' + x}>
      <QNote x={x} y={y} />
      <Stem x={x - 5} y1={y} y2={end} />
    </g>
  );
  return (
    <g>
      {items.map((it, i) => {
        if (it.q !== undefined) return note(it.q);
        if (it.r !== undefined) return <ERest key={'r' + i} x={it.r} y={y - 1} />;
        const b = it.b16 ?? it.b8!;
        return (
          <g key={'b' + i}>
            {note(b[0])}
            {note(b[1])}
            <rect x={b[0] - 5.6} y={end - 3.5} width={b[1] - b[0] + 1.2} height="4" fill="#0b0b0b" />
            {it.b16 && <rect x={b[0] - 5.6} y={end - 8.8} width={b[1] - b[0] + 1.2} height="4" fill="#0b0b0b" />}
          </g>
        );
      })}
    </g>
  );
};

const wave = (x1: number, x2: number, y: number) => {
  let d = `M${x1} ${y}`;
  let up = true;
  for (let x = x1; x < x2; x += 2.6) {
    d += ` Q${x + 1.3} ${up ? y - 4.4 : y + 4.4} ${x + 2.6} ${y}`;
    up = !up;
  }
  return d;
};

const PageOne = () => (
  <Sheet viewBox="268 178 957 1277">
    <T x={321} y={234} s={26} w={170}>PERCUSSION</T>
    <T x={321} y={257} s={18} reg w={225}>Mark Tree, Suspended Cymbal,</T>
    <T x={321} y={278} s={18} reg w={221}>Piatti, Snare Drum, Bass Drum</T>
    <T x={917} y={234} s={27} w={255}>MELODY SKYLARK</T>
    <T x={651} y={301} s={54} w={189}>1M01 v1</T>
    <T x={682} y={344} s={26} i w={133}>“Main Title”</T>
    <T x={961} y={335} s={20} w={211}>Phillip Arthur Simmons</T>
    <T x={1046} y={363} s={18} w={126}>orch. PAS Music</T>
    <T x={343} y={404} s={20} w={152}>Cosmic Shimmer</T>
    <TempoMark x={506} y={404} />
    <T x={518} y={404} s={20} w={36}>= 96</T>
    <TempoMark x={981} y={404} />
    <T x={991} y={404} s={20} w={38}>= 76</T>

    {/* System 1 */}
    <T x={378} y={446} s={17} w={77}>Mark Tree</T>
    <T x={1075} y={435} s={17} w={73}>Sus. Cym.</T>
    <T x={1075} y={456} s={17} i w={19}>l.v.</T>
    <path d={wave(374, 1067, 459)} fill="none" stroke="#111" strokeWidth="1.7" />
    <Staff x1={321} x2={1172} top={471} />
    <Bar x={315} y1={468} y2={505} w={4} />
    <Clef x={324} top={471} />
    <T x={343} y={486} s={39} w={17}>4</T>
    <T x={343} y={513} s={39} w={17}>4</T>
    {[515, 665, 815, 965, 1172].map(x => <Bar key={x} x={x} y1={471} y2={502.8} />)}
    {[385, 534, 684, 834, 985].map(x => <Diamond key={x} x={x} y={478.5} />)}
    {[384, 534, 684, 834].map(x => (
      <path key={x} d={`M${x + 3} 473 C${x + 30} 460 ${x + 105} 460 ${x + 147} 473`} fill="none" stroke="#111" strokeWidth="1.3" />
    ))}
    <Stem x={978} y1={478} y2={505} />
    <Diamond x={1082} y={474} />
    <Arc x={1082} y={466} w={13} h={3.4} />
    <Tremolo x={1074} y1={485} y2={507} />
    <Num x={324} y={518}>1</Num>
    <Num x={515} y={518}>2</Num>
    <Num x={665} y={518}>3</Num>
    <Num x={815} y={518}>4</Num>
    <Num x={965} y={518}>5</Num>
    <Dyn x={383} y={527}>p</Dyn>
    <Dyn x={1079} y={527}>p</Dyn>
    <Hairpin x1={1093} x2={1134} y={522} h={5} />
    <T x={1137} y={527} s={23} i>mf</T>

    {/* System 2 */}
    <T x={606} y={608} s={38} reg a="middle">3</T>
    <T x={883} y={582} s={17} w={73}>Sus. Cym.</T>
    <T x={883} y={602} s={17} i w={19}>l.v.</T>
    <Staff x1={321} x2={1172} top={617} />
    <Bar x={315} y1={615} y2={651} w={4} />
    <Clef x={324} top={617} />
    <rect x={590} y={629} width={32} height={8} fill="#0b0b0b" />
    <Bar x={590} y1={625} y2={641} />
    <Bar x={622} y1={625} y2={641} />
    <Bar x={871} y1={617} y2={649} />
    <Bar x={1167} y1={617} y2={649} />
    <Bar x={1172} y1={617} y2={649} />
    <Diamond x={891} y={621} />
    <Arc x={889} y={613} w={13} h={3.4} />
    <Tremolo x={890} y1={630} y2={651} />
    <T x={606} y={665} s={13} reg a="middle">6–8</T>
    <Num x={871} y={664}>9</Num>
    <Dyn x={891} y={673}>p</Dyn>
    <Hairpin x1={905} x2={1160} y={668} h={6.5} dim />

    {/* System 3 */}
    <T x={353} y={685} s={20} w={98}>Heroically!</T>
    <TempoMark x={464} y={685} />
    <T x={474} y={685} s={20} w={44}>= 116</T>
    <T x={353} y={710} s={17} w={33}>Piat.</T>
    <T x={353} y={731} s={17} i w={19}>l.v.</T>
    <Marcato x={357} y={740} />
    <XHead x={357} y={762} />
    <Arc x={358} y={757} w={15} h={3.4} />
    <Stem x={353} y1={762} y2={789} />
    <Staff x1={320} x2={1172} top={766} />
    <Staff x1={320} x2={1172} top={858} />
    <Bar x={315} y1={763} y2={892} w={4} />
    <Clef x={324} top={766} />
    <Clef x={324} top={858} />
    {[610, 902, 1172].map(x => <Bar key={x} x={x} y1={766} y2={890} />)}
    <QRest x={410} y={782} />
    <Block x={467} y={777} />
    <Block x={755} y={774} />
    <Block x={1036} y={774} />
    <Dyn x={358} y={823}>f</Dyn>
    <T x={353} y={850} s={17} w={50}>Sn. Dr.</T>
    <DrumRow top={858} items={[{ q: 358 }, { q: 412 }, { r: 467 }, { b16: [505, 532] }, { q: 560 }, { q: 628 }, { q: 682 }, { r: 737 }, { b16: [775, 802] }, { b8: [830, 868] }, { q: 920 }, { q: 974 }, { r: 1028 }, { b16: [1067, 1094] }, { q: 1122 }]} />
    <Num x={327} y={907}>10</Num>
    <Num x={610} y={907}>11</Num>
    <Num x={903} y={907}>12</Num>
    <Dyn x={358} y={918}>f</Dyn>

    {/* System 4 */}
    <T x={638} y={970} s={17} i w={19}>l.v.</T>
    <Marcato x={641} y={978} />
    <XHead x={641} y={1000} />
    <Arc x={642} y={996} w={15} h={3.4} />
    <Stem x={638} y1={1000} y2={1028} />
    <Staff x1={320} x2={1172} top={1004} />
    <Staff x1={320} x2={1172} top={1083} />
    <Bar x={315} y1={1002} y2={1117} w={4} />
    <Clef x={324} top={1004} />
    <Clef x={324} top={1083} />
    {[625, 887, 1172].map(x => <Bar key={x} x={x} y1={1004} y2={1115} />)}
    <Block x={483} y={1012} />
    <QRest x={694} y={1020} />
    <Block x={748} y={1015} />
    <Block x={1029} y={1012} />
    <Dyn x={643} y={1062}>f</Dyn>
    <DrumRow top={1083} items={[{ q: 358 }, { q: 411 }, { r: 463 }, { b16: [501, 528] }, { b8: [554, 591] }, { q: 642 }, { q: 695 }, { r: 748 }, { b16: [786, 812] }, { q: 838 }, { q: 905 }, { q: 958 }, { r: 1010 }, { b16: [1048, 1075] }, { b8: [1101, 1139] }]} />
    <Num x={327} y={1132}>13</Num>
    <Num x={625} y={1132}>14</Num>
    <Num x={887} y={1132}>15</Num>

    {/* System 5 */}
    <T x={353} y={1187} s={17} w={111}>Sus. Cym./Piat.</T>
    <Breath x={426} y={1198} />
    <Breath x={564} y={1198} />
    <Marcato x={357} y={1216} />
    <Marcato x={426} y={1208} />
    <Marcato x={564} y={1208} />
    <XHead x={357} y={1233} />
    <XHead x={495} y={1233} />
    <XHead x={426} y={1226} />
    <XHead x={564} y={1226} />
    <Stem x={423} y1={1226} y2={1253} />
    <Stem x={560} y1={1226} y2={1253} />
    <Tremolo x={354} y1={1243} y2={1266} />
    <Tremolo x={491} y1={1243} y2={1266} />
    <Staff x1={320} x2={1172} top={1230} />
    <Staff x1={320} x2={1172} top={1321} />
    <Bar x={315} y1={1227} y2={1355} w={4} />
    <Clef x={324} top={1230} />
    <Clef x={324} top={1321} />
    {[629, 878, 1167, 1172].map(x => <Bar key={x} x={x} y1={1230} y2={1353} />)}
    <Block x={753} y={1238} />
    <Block x={1021} y={1238} />
    <T x={345} y={1285} s={21} i heavy>mp</T>
    <Hairpin x1={376} x2={415} y={1281} h={5.5} />
    <Dyn x={427} y={1285}>f</Dyn>
    <T x={482} y={1285} s={21} i heavy>mp</T>
    <Hairpin x1={514} x2={553} y={1281} h={5.5} />
    <Dyn x={565} y={1285}>f</Dyn>
    <T x={353} y={1313} s={17} w={42}>B. Dr.</T>
    {[[358, 363], [497, 501], [646, 652], [715, 720], [894, 900], [1033, 1038]].map(([h, s]) => (
      <g key={h}>
        <QNote x={h} y={1348.5} />
        <Stem x={s} y1={1322} y2={1348} />
      </g>
    ))}
    {[358, 497, 715, 894].map(x => <Under key={x} x={x - 1} y={1356} />)}
    {[425, 563, 962, 1100].map(x => <QRest key={x} x={x} y={1337} />)}
    <Block x={785} y={1333} />
    <Breath x={1033} y={1311} />
    <Num x={327} y={1370}>16</Num>
    <Num x={629} y={1370}>17</Num>
    <Num x={878} y={1370}>18</Num>
    <Dyn x={358} y={1383}>f</Dyn>
    <T x={321} y={1420} s={11} w={129}>01/2/2024 | 11:04:08 | PAS</T>
  </Sheet>
);

const emptyStaves = [510, 645.3, 780.6, 915.9, 1051.2, 1186.5, 1321.8];

const PageTwo = () => (
  <Sheet viewBox="1255 178 957 1277">
    <T x={1309} y={228} s={20} w={132}>PERCUSSION</T>
    <T x={1734} y={228} s={20} a="middle">- 2 -</T>
    <T x={2083} y={228} s={20} w={76}>1M01 v1</T>
    <T x={1496} y={240} s={17} w={33}>Piat.</T>
    <T x={1496} y={261} s={17} i w={19}>l.v.</T>
    <T x={1822} y={261} s={17} i w={19}>l.v.</T>
    <T x={1991} y={261} s={17} w={73}>Sus. Cym.</T>
    <T x={1991} y={281} s={17} i w={19}>l.v.</T>
    <Marcato x={1500} y={270} />
    <Marcato x={1825} y={270} />
    <XHead x={1500} y={292} />
    <XHead x={1825} y={292} />
    <Arc x={1501} y={287} w={15} h={3.4} />
    <Arc x={1826} y={287} w={15} h={3.4} />
    <Stem x={1496} y1={292} y2={319} />
    <Stem x={1822} y1={292} y2={319} />
    <Staff x1={1307} x2={2159} top={297} />
    <Staff x1={1307} x2={2159} top={375} />
    <Bar x={1302} y1={293} y2={409} w={4} />
    <Clef x={1311} top={297} />
    <Clef x={1311} top={375} />
    {[1653, 1978, 2147].map(x => <Bar key={x} x={x} y1={297} y2={407} />)}
    <rect x={2152} y={297} width={7} height={110} fill="#0b0b0b" />
    <Block x={1345} y={308} />
    <QRest x={1577} y={313} />
    <Block x={1670} y={308} />
    <QRest x={1903} y={313} />
    <Diamond x={1997} y={300} />
    <Arc x={1997} y={292} w={15} h={3.4} />
    <Tremolo x={1997} y1={310} y2={330} />
    <Dyn x={1502} y={353}>f</Dyn>
    <Dyn x={1996} y={353}>p</Dyn>
    <Hairpin x1={2008} x2={2120} y={347} h={5.5} dim />
    <Dyn x={2133} y={353}>f</Dyn>
    <T x={1418} y={367} s={17} w={42}>B. Dr.</T>
    <QRest x={1343} y={391} />
    <QNote x={1423} y={403} />
    <Stem x={1428} y1={375} y2={403} />
    <Block x={1501} y={387} />
    <QRest x={1668} y={391} />
    <QNote x={1748} y={403} />
    <Stem x={1753} y1={375} y2={403} />
    <Block x={1826} y={387} />
    <Block x={2062} y={383} />
    <Under x={1423} y={410} />
    <Under x={1748} y={410} />
    <Num x={1315} y={423}>19</Num>
    <Num x={1653} y={423}>20</Num>
    <Num x={1978} y={423}>21</Num>
    <Dyn x={1423} y={438}>f</Dyn>
    {emptyStaves.map(t => <Staff key={t} x1={1309} x2={2159} top={t} />)}
    <T x={1309} y={1420} s={11} w={129}>01/2/2024 | 11:04:08 | PAS</T>
    <T x={2159} y={1420} s={11} a="end">orch v3</T>
  </Sheet>
);

export default function App() {
  return (
    <Screen>
      <Global />
      <WindowShadow>
        <Win>
          <TitleBar>
            <Lights>
              <Light $c="#ee6a5f" $dot />
              <Light $c="#f5bf4f" />
              <Light $c="#61c554" />
            </Lights>
            <TitleWrap>
              <DoricoIcon />
              <TitleText>Flow 1 in SAMPLE CUE - PAS MUSIC - DORICO FILM SCORE TEMPLATE 2023.14.1</TitleText>
            </TitleWrap>
            <span />
          </TitleBar>
          <Toolbar>
            <Tabs $w={456}>
              <Tab>Setup</Tab>
              <Tab $on $size={18.6}>Write</Tab>
              <Tab>Engrave</Tab>
              <Tab>Play</Tab>
              <Tab>Print</Tab>
            </Tabs>
            <Dropdown>
              PERCUSSION
              <Chevron />
            </Dropdown>
            <ToolBtn $w={54} $bg="#37414d" $ml={19}><EyeIcon /></ToolBtn>
            <ToolBtn $w={55} $bg="#40a9ff" $ml={4}><SplitIcon /></ToolBtn>
            <Spacer />
            <ReelIcon />
            <ToolBtn $w={56} $bg="#37414d" $ml={6}><MixerIcon /></ToolBtn>
            <ToolBtn $w={49} $h={49} $bg="#40a9ff" $ml={43}><PowerIcon /></ToolBtn>
            <Transport>
              <TimeText>11.1.1.000</TimeText>
              <RewindIcon />
              <FixedIcon />
              <PlayIcon />
              <RecordIcon />
              <MetronomeIcon />
              <TempoBox>
                <TempoNote />
                <UpDown />
                116
              </TempoBox>
              <SpeakerIcon />
              <KebabIcon />
            </Transport>
            <ToolBtn $w={49} $bg="#37414d" $ml={4}><UndoIcon /></ToolBtn>
            <ToolBtn $w={55}><RedoIcon /></ToolBtn>
            <ToolBtn $w={55} $bg="#37414d"><HelpIcon /></ToolBtn>
          </Toolbar>
          <Main>
            <LeftPanel>
              <LeftSection $h={72}>
                <Slot $h={71}><PanelIcon /></Slot>
              </LeftSection>
              <LeftSection $h={297}>
                <Slot><PointerIcon /></Slot>
                <Slot><NoteAddIcon /></Slot>
                <Slot><InsertNoteIcon /></Slot>
                <Slot><CoilIcon /></Slot>
                <Slot><BeamNoteIcon /></Slot>
                <CornerMark />
              </LeftSection>
              <LeftSection $h={121}>
                <Slot><LockIcon /></Slot>
                <Slot><ClampIcon /></Slot>
              </LeftSection>
              <LeftSection $last>
                <Slot><RestNoteIcon /></Slot>
                <Slot><DottedIcon /></Slot>
                <Slot><RestIcon /></Slot>
                <Slot><TupletIcon /></Slot>
                <Slot><NoNoteIcon /></Slot>
                <Slot><TieIcon /></Slot>
                <Slot><ScissorsIcon /></Slot>
              </LeftSection>
            </LeftPanel>
            <Canvas>
              <PageOne />
              <PageTwo />
            </Canvas>
            <RightPanel>
              <PaletteGroup>
                <PaletteBtn><PaletteIcon /></PaletteBtn>
                <KeysBtn><KeyboardIcon /></KeysBtn>
              </PaletteGroup>
              <RightSlot><ClefIcon /></RightSlot>
              <RightSlot><SharpsIcon /></RightSlot>
              <RightSlot><TimeSigIcon /></RightSlot>
              <RightSlot><TempoIcon /></RightSlot>
              <RightSlot><DynamicIcon /></RightSlot>
              <RightSlot><TrillIcon /></RightSlot>
              <RightSlot><EndingIcon /></RightSlot>
              <RightSlot><BarsIcon /></RightSlot>
              <RightSlot><FermataIcon /></RightSlot>
              <RightSlot><BowingIcon /></RightSlot>
              <RightSlot><DiagArrowIcon /></RightSlot>
              <RightSlot><EarIcon /></RightSlot>
              <RightSlot><ClapperIcon /></RightSlot>
              <RightSlot><BubbleIcon /></RightSlot>
              <RightSlot>
                <ChecklistIcon />
                <Badge>14</Badge>
              </RightSlot>
            </RightPanel>
          </Main>
          <StatusBar>
            <NoteMenu>
              <SixteenthIcon />
              <Chevron s={18} />
            </NoteMenu>
            <StatusGap $w={9} />
            <SmallGroup>
              <Tab $size={16.8} $pad={14}>Concert Pitch</Tab>
              <Tab $size={16.1} $pad={12} $on>Transposed Pitch</Tab>
            </SmallGroup>
            <StatusText $ml={15}>No selection</StatusText>
            <Center><Caret /></Center>
            <Toggle />
            <StatusText $w={145}>Follow playhead</StatusText>
            <SmallGroup>
              <IconCell $w={49} $on><MarqueeIcon /></IconCell>
              <IconCell $w={49}><HandIcon /></IconCell>
            </SmallGroup>
            <StatusGap $w={10} />
            <SmallGroup $w={313}>
              <Tab $size={16.2} $pad={12} $on>Page view</Tab>
              <Tab $size={16.8} $pad={15}>Galley view</Tab>
              <Tab $size={16.8} $pad={12}>Fill view</Tab>
            </SmallGroup>
            <StatusGap $w={10} />
            <SmallGroup>
              <IconCell $w={47} $on><SpreadsIcon /></IconCell>
              <IconCell $w={46}><StackIcon /></IconCell>
              <IconCell $w={46}><RowIcon /></IconCell>
              <IconCell $w={45}><ColumnIcon /></IconCell>
            </SmallGroup>
            <StatusGap $w={10} />
            <SmallGroup $w={37}><SearchIcon /></SmallGroup>
            <StatusGap $w={2} />
            <ZoomBox>
              96%
              <Chevron s={22} />
            </ZoomBox>
            <StatusGap $w={3} />
            <SmallGroup $w={36}><MinusIcon /></SmallGroup>
            <StatusGap $w={2} />
            <SmallGroup $w={36}><PlusIcon /></SmallGroup>
            <StatusGap $w={56} />
          </StatusBar>
        </Win>
      </WindowShadow>
    </Screen>
  );
}
